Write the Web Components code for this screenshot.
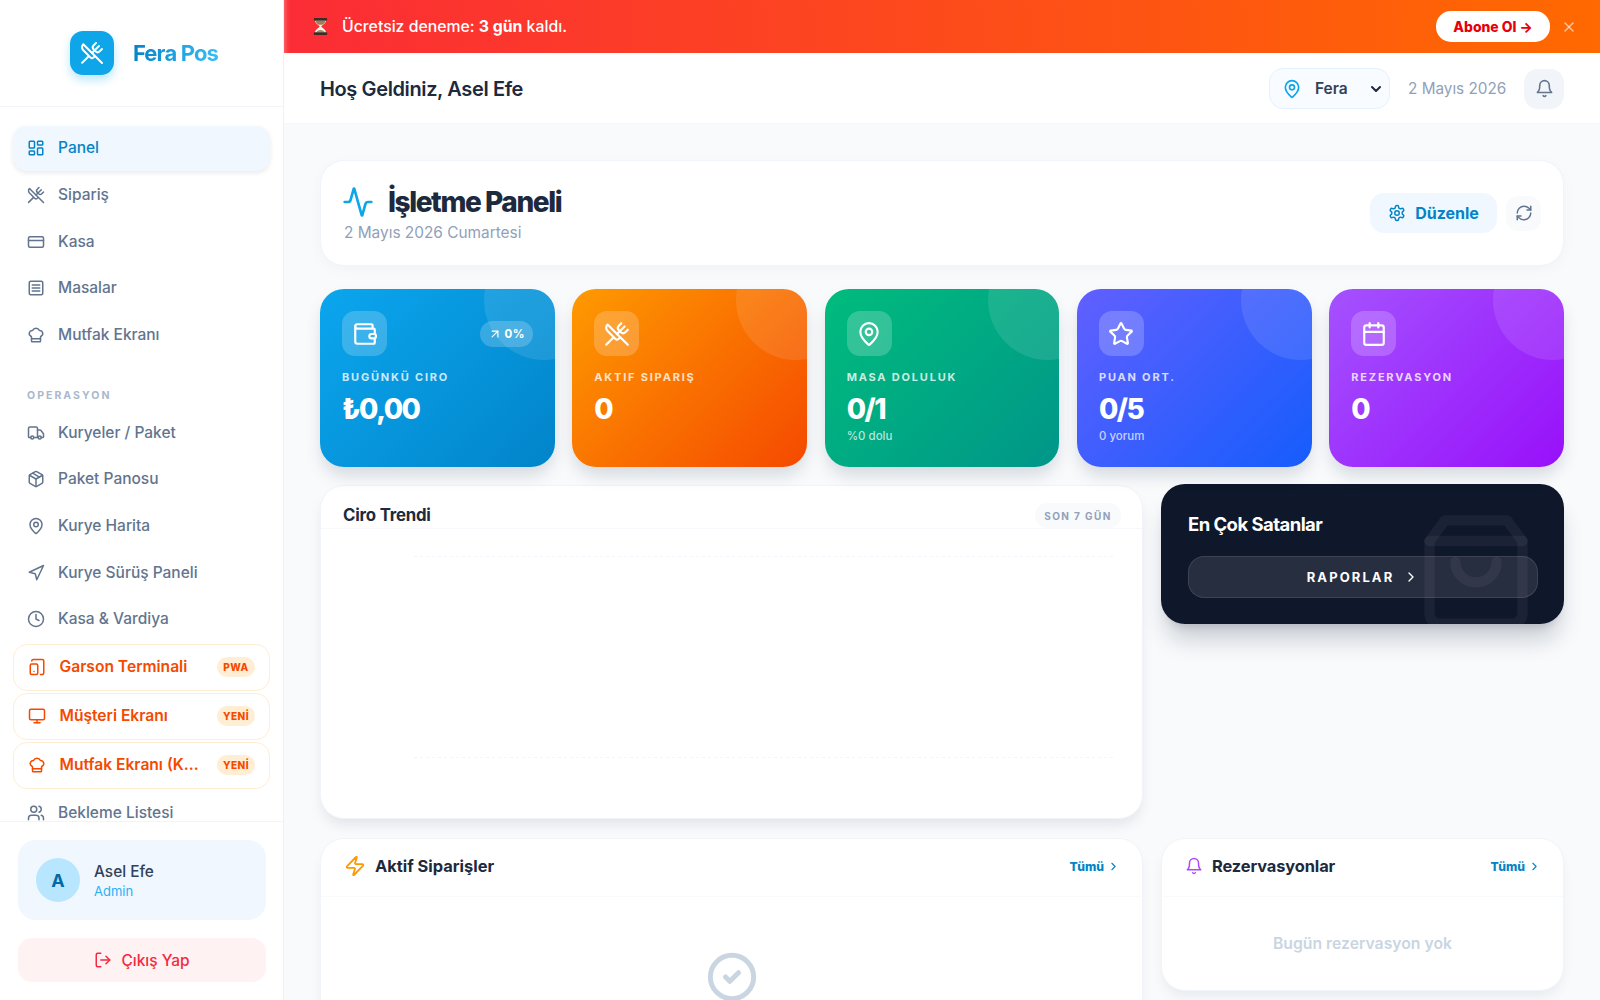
<!DOCTYPE html>
<html lang="tr">
<head>
<meta charset="utf-8">
<title>Fera Pos</title>
<style>
html,body{margin:0;padding:0;height:100%;overflow:hidden;background:#f8fafc;font-family:Inter,"Noto Sans",sans-serif;}
</style>
</head>
<body>
<app-shell>
  <side-bar slot="side">
    <brand-logo slot="brand">Fera Pos</brand-logo>
    <nav-item icon="dashboard" active>Panel</nav-item>
    <nav-item icon="utensils">Sipariş</nav-item>
    <nav-item icon="card">Kasa</nav-item>
    <nav-item icon="list">Masalar</nav-item>
    <nav-item icon="chef">Mutfak Ekranı</nav-item>
    <nav-heading>OPERASYON</nav-heading>
    <nav-item icon="truck">Kuryeler / Paket</nav-item>
    <nav-item icon="package">Paket Panosu</nav-item>
    <nav-item icon="pin">Kurye Harita</nav-item>
    <nav-item icon="navigation">Kurye Sürüş Paneli</nav-item>
    <nav-item icon="clock">Kasa &amp; Vardiya</nav-item>
    <nav-item icon="tablet" promo badge="PWA">Garson Terminali</nav-item>
    <nav-item icon="monitor" promo badge="YENİ">Müşteri Ekranı</nav-item>
    <nav-item icon="chef" promo badge="YENİ">Mutfak Ekranı (KDS)</nav-item>
    <nav-item icon="users">Bekleme Listesi</nav-item>
    <user-card slot="foot" name="Asel Efe" role="Admin" initial="A"></user-card>
    <logout-button slot="foot">Çıkış Yap</logout-button>
  </side-bar>
  <trial-banner slot="banner">Ücretsiz deneme: <b>3 gün</b> kaldı.</trial-banner>
  <top-bar slot="top" greeting="Hoş Geldiniz, Asel Efe" branch="Fera" date="2 Mayıs 2026"></top-bar>
  <page-title title-text="İşletme Paneli" sub="2 Mayıs 2026 Cumartesi"></page-title>
  <stat-row>
    <stat-card icon="wallet" label="BUGÜNKÜ CIRO" value="₺0,00" trend="0%" from="#0ba6ee" to="#0284c9"></stat-card>
    <stat-card icon="utensils" label="AKTIF SIPARIŞ" value="0" from="#fe9a00" to="#f54900"></stat-card>
    <stat-card icon="pin" label="MASA DOLULUK" value="0/1" sub="%0 dolu" from="#00bc7d" to="#009689"></stat-card>
    <stat-card icon="star" label="PUAN ORT." value="0/5" sub="0 yorum" from="#615fff" to="#155dfc"></stat-card>
    <stat-card icon="calendar" label="REZERVASYON" value="0" from="#a452ff" to="#9810fa"></stat-card>
  </stat-row>
  <two-col>
    <sales-trend slot="main" heading="Ciro Trendi" tag="SON 7 GÜN"></sales-trend>
    <best-sellers slot="aside" heading="En Çok Satanlar" action="RAPORLAR"></best-sellers>
  </two-col>
  <two-col low>
    <list-panel slot="main" icon="zap" tint="#fe9a00" heading="Aktif Siparişler" link="Tümü" tall>
      <ui-icon name="check" size="52" sw="2.3" color="#cad5e2"></ui-icon>
    </list-panel>
    <list-panel slot="aside" icon="bell" tint="#ad46ff" heading="Rezervasyonlar" link="Tümü">
      <empty-note>Bugün rezervasyon yok</empty-note>
    </list-panel>
  </two-col>
</app-shell>

<script>
const ICONS={
dashboard:'<rect width="7" height="9" x="3" y="3" rx="1"/><rect width="7" height="5" x="14" y="3" rx="1"/><rect width="7" height="9" x="14" y="12" rx="1"/><rect width="7" height="5" x="3" y="16" rx="1"/>',
utensils:'<path d="m16 2-2.3 2.3a3 3 0 0 0 0 4.2l1.8 1.8a3 3 0 0 0 4.2 0L22 8"/><path d="M15 15 3.3 3.3a4.2 4.2 0 0 0 0 6l7.3 7.3c.7.7 2 .7 2.8 0L15 15Zm0 0 7 7"/><path d="m2.1 21.8 6.4-6.3"/><path d="m19 5-7 7"/>',
card:'<rect width="20" height="14" x="2" y="5" rx="2"/><line x1="2" x2="22" y1="10" y2="10"/>',
list:'<rect width="18" height="18" x="3" y="3" rx="2"/><path d="M7 8h10"/><path d="M7 12h10"/><path d="M7 16h10"/>',
chef:'<path d="M17 21a1 1 0 0 0 1-1v-5.35c0-.457.316-.844.727-1.041a4 4 0 0 0-2.134-7.589 5 5 0 0 0-9.186 0 4 4 0 0 0-2.134 7.588c.411.198.727.585.727 1.041V20a1 1 0 0 0 1 1Z"/><path d="M6 17h12"/>',
truck:'<path d="M14 18V6a2 2 0 0 0-2-2H4a2 2 0 0 0-2 2v11a1 1 0 0 0 1 1h2"/><path d="M15 18H9"/><path d="M19 18h2a1 1 0 0 0 1-1v-3.65a1 1 0 0 0-.22-.624l-3.48-4.35A1 1 0 0 0 17.52 8H14"/><circle cx="17" cy="18" r="2"/><circle cx="7" cy="18" r="2"/>',
package:'<path d="M11 21.73a2 2 0 0 0 2 0l7-4A2 2 0 0 0 21 16V8a2 2 0 0 0-1-1.73l-7-4a2 2 0 0 0-2 0l-7 4A2 2 0 0 0 3 8v8a2 2 0 0 0 1 1.73z"/><path d="M12 22V12"/><polyline points="3.29 7 12 12 20.71 7"/><path d="m7.5 4.27 9 5.15"/>',
pin:'<path d="M20 10c0 4.993-5.539 10.193-7.399 11.799a1 1 0 0 1-1.202 0C9.539 20.193 4 14.993 4 10a8 8 0 0 1 16 0"/><circle cx="12" cy="10" r="3"/>',
navigation:'<polygon points="3 11 22 2 13 21 11 13 3 11"/>',
clock:'<circle cx="12" cy="12" r="10"/><polyline points="12 6 12 12 16 14"/>',
tablet:'<rect width="10" height="14" x="3" y="8" rx="2"/><path d="M5 4a2 2 0 0 1 2-2h12a2 2 0 0 1 2 2v16a2 2 0 0 1-2 2h-2.4"/><path d="M8 18h.01"/>',
monitor:'<rect width="20" height="14" x="2" y="3" rx="2"/><line x1="8" x2="16" y1="21" y2="21"/><line x1="12" x2="12" y1="17" y2="21"/>',
users:'<path d="M16 21v-2a4 4 0 0 0-4-4H6a4 4 0 0 0-4 4v2"/><circle cx="9" cy="7" r="4"/><path d="M22 21v-2a4 4 0 0 0-3-3.87"/><path d="M16 3.13a4 4 0 0 1 0 7.75"/>',
logout:'<path d="M9 21H5a2 2 0 0 1-2-2V5a2 2 0 0 1 2-2h4"/><polyline points="16 17 21 12 16 7"/><line x1="21" x2="9" y1="12" y2="12"/>',
bell:'<path d="M6 8a6 6 0 0 1 12 0c0 7 3 9 3 9H3s3-2 3-9"/><path d="M10.3 21a1.94 1.94 0 0 0 3.4 0"/>',
activity:'<path d="M22 12h-2.48a2 2 0 0 0-1.93 1.46l-2.35 8.36a.25.25 0 0 1-.48 0L9.24 2.18a.25.25 0 0 0-.48 0l-2.35 8.36A2 2 0 0 1 4.49 12H2"/>',
settings:'<path d="M12.22 2h-.44a2 2 0 0 0-2 2v.18a2 2 0 0 1-1 1.73l-.43.25a2 2 0 0 1-2 0l-.15-.08a2 2 0 0 0-2.73.73l-.22.38a2 2 0 0 0 .73 2.73l.15.1a2 2 0 0 1 1 1.72v.51a2 2 0 0 1-1 1.74l-.15.09a2 2 0 0 0-.73 2.73l.22.38a2 2 0 0 0 2.73.73l.15-.08a2 2 0 0 1 2 0l.43.25a2 2 0 0 1 1 1.73V20a2 2 0 0 0 2 2h.44a2 2 0 0 0 2-2v-.18a2 2 0 0 1 1-1.73l.43-.25a2 2 0 0 1 2 0l.15.08a2 2 0 0 0 2.73-.73l.22-.39a2 2 0 0 0-.73-2.73l-.15-.08a2 2 0 0 1-1-1.74v-.5a2 2 0 0 1 1-1.74l.15-.09a2 2 0 0 0 .73-2.73l-.22-.38a2 2 0 0 0-2.73-.73l-.15.08a2 2 0 0 1-2 0l-.43-.25a2 2 0 0 1-1-1.73V4a2 2 0 0 0-2-2z"/><circle cx="12" cy="12" r="3"/>',
refresh:'<path d="M3 12a9 9 0 0 1 9-9 9.75 9.75 0 0 1 6.74 2.74L21 8"/><path d="M21 3v5h-5"/><path d="M21 12a9 9 0 0 1-9 9 9.75 9.75 0 0 1-6.74-2.74L3 16"/><path d="M8 16H3v5"/>',
wallet:'<path d="M19 7V4a1 1 0 0 0-1-1H5a2 2 0 0 0 0 4h15a1 1 0 0 1 1 1v4h-3a2 2 0 0 0 0 4h3a1 1 0 0 0 1-1v-2a1 1 0 0 0-1-1"/><path d="M3 5v14a2 2 0 0 0 2 2h15a1 1 0 0 0 1-1v-4"/>',
upright:'<path d="M7 7h10v10"/><path d="M7 17 17 7"/>',
star:'<path d="M11.525 2.295a.53.53 0 0 1 .95 0l2.31 4.679a2.123 2.123 0 0 0 1.595 1.16l5.166.756a.53.53 0 0 1 .294.904l-3.736 3.638a2.123 2.123 0 0 0-.611 1.878l.882 5.14a.53.53 0 0 1-.771.56l-4.618-2.428a2.122 2.122 0 0 0-1.973 0L6.396 21.01a.53.53 0 0 1-.77-.56l.881-5.139a2.122 2.122 0 0 0-.611-1.879L2.16 9.795a.53.53 0 0 1 .294-.906l5.165-.755a2.122 2.122 0 0 0 1.597-1.16z"/>',
calendar:'<path d="M8 2v4"/><path d="M16 2v4"/><rect width="18" height="18" x="3" y="4" rx="2"/><path d="M3 10h18"/>',
bag:'<path d="M6 2 3 6v14a2 2 0 0 0 2 2h14a2 2 0 0 0 2-2V6l-3-4Z"/><path d="M3 6h18"/><path d="M16 10a4 4 0 0 1-8 0"/>',
chevright:'<path d="m9 18 6-6-6-6"/>',
chevdown:'<path d="m6 9 6 6 6-6"/>',
x:'<path d="M18 6 6 18"/><path d="m6 6 12 12"/>',
zap:'<path d="M4 14a1 1 0 0 1-.78-1.63l9.9-10.2a.5.5 0 0 1 .86.46l-1.92 6.02A1 1 0 0 0 13 10h7a1 1 0 0 1 .78 1.63l-9.9 10.2a.5.5 0 0 1-.86-.46l1.92-6.02A1 1 0 0 0 11 14z"/>',
check:'<circle cx="12" cy="12" r="10"/><path d="m9 12 2 2 4-4"/>'
};
const HOURGLASS='<svg xmlns="http://www.w3.org/2000/svg" width="15" height="17" viewBox="0 0 15 17" role="img" aria-label="⏳"><path d="M2 2C2 6 6.6 7.4 6.6 8.5S2 11 2 15h11c0-4-4.6-5.400-4.600-6.500S13 6 13 2z" fill="#f4f2f0"/><path d="M2.800 3h9.400c0 1.800-1.500 3-2.800 3.700H5.600C4.300 6 2.800 4.800 2.800 3z" fill="#a97b52"/><path d="M3.200 14.500c.5-1.600 2.300-2.500 4.300-2.500s3.800.9 4.300 2.500z" fill="#b08659"/><rect x=".8" width="13.400" height="2.700" rx="1.100" fill="#3b2c26"/><rect x=".8" y="14.300" width="13.400" height="2.700" rx="1.100" fill="#3b2c26"/></svg>';
const esc=s=>(s==null?'':String(s)).replace(/&/g,'&amp;').replace(/</g,'&lt;').replace(/"/g,'&quot;');
const icon=(n,s,c,sw)=>`<ui-icon name="${n}" size="${s}"${c?` color="${c}"`:''}${sw?` sw="${sw}"`:''}></ui-icon>`;
function el(tag,render){
  customElements.define(tag,class extends HTMLElement{
    connectedCallback(){
      if(this.shadowRoot)return;
      const a=this.attachShadow({mode:'open'});
      const attrs=new Proxy({},{get:(_,k)=>this.getAttribute(k),has:(_,k)=>this.hasAttribute(k)});
      a.innerHTML=render(attrs);
    }
  });
}
el('ui-icon',a=>{const s=a.size||18;return `<style>:host{display:inline-flex;flex:none;width:${s}px;height:${s}px;color:${a.color||'inherit'}}svg{display:block}</style><svg xmlns="http://www.w3.org/2000/svg" width="${s}" height="${s}" viewBox="0 0 24 24" fill="none" stroke="currentColor" stroke-width="${a.sw||2}" stroke-linecap="round" stroke-linejoin="round">${ICONS[a.name]||''}</svg>`});

el('app-shell',()=>`<style>
:host{display:grid;grid-template-columns:284px 1fr;height:100vh;overflow:hidden;color:#1d293d;font-family:Inter,"Noto Sans",sans-serif}
.main{display:flex;flex-direction:column;min-width:0;height:100vh;overflow:hidden}
.scroll{flex:1;min-height:0;overflow:hidden;padding:37px 36px 0;display:flex;flex-direction:column}
</style><slot name="side"></slot><div class="main"><slot name="banner"></slot><slot name="top"></slot><div class="scroll"><slot></slot></div></div>`);

el('side-bar',()=>`<style>
:host{display:flex;flex-direction:column;height:100vh;background:#fff;border-right:1px solid #eef2f8;box-sizing:border-box;overflow:hidden}
.brand{height:107px;flex:none;box-sizing:border-box;border-bottom:1px solid #f1f5f9;display:flex;align-items:center;justify-content:center;padding-left:5px}
nav{flex:1;min-height:0;overflow:hidden;padding:19px 13px 0;display:flex;flex-direction:column;gap:2px}
.foot{flex:none;border-top:1px solid #f1f5f9;padding:18px 17px 18px 18px;display:flex;flex-direction:column;gap:18px}
</style><div class="brand"><slot name="brand"></slot></div><nav><slot></slot></nav><div class="foot"><slot name="foot"></slot></div>`);

el('brand-logo',()=>`<style>
:host{display:flex;align-items:center;gap:19px}
.mark{width:44px;height:44px;border-radius:13px;background:#0ea5e9;color:#fff;display:flex;align-items:center;justify-content:center;box-shadow:0 5px 10px rgba(14,165,233,.28)}
.name{font-size:22px;font-weight:700;letter-spacing:-.85px;line-height:32px;background:linear-gradient(90deg,#0284c7,#38bdf8);-webkit-background-clip:text;background-clip:text;color:transparent}
</style><span class="mark">${icon('utensils',24,'#fff')}</span><span class="name"><slot></slot></span>`);

el('nav-item',a=>{
 const promo='promo' in a, active='active' in a;
 return `<style>
:host{display:flex;flex:none;box-sizing:border-box;height:${promo?47:44.67}px;align-items:center;gap:${promo?13.5:13}px;padding:0 14px;border-radius:14px;font-size:${promo?15.6:15.5}px;line-height:20px;font-weight:${promo?600:500};color:${promo?'#f54900':active?'#0284c7':'#62748e'};
${active?'background:#f0f7fe;box-shadow:0 2px 5px rgba(15,23,43,.09);':''}${promo?'border:1.5px solid #ffedd4;':''}}
.t{flex:1;min-width:0;white-space:nowrap;overflow:hidden;text-overflow:ellipsis}
.b{flex:none;width:38px;height:20px;border-radius:10px;background:#ffedd4;color:#f54900;font-size:10px;font-weight:800;letter-spacing:.5px;display:flex;align-items:center;justify-content:center}
</style>${icon(a.icon,18,promo?'#f54900':null)}<span class="t"><slot></slot></span>${a.badge?`<span class="b">${esc(a.badge)}</span>`:''}`});

el('nav-heading',()=>`<style>
:host{display:flex;flex:none;height:49px;box-sizing:border-box;align-items:flex-end;padding:0 14px 5px;font-size:10.5px;line-height:14px;font-weight:700;letter-spacing:2.05px;color:#aab8cc}
</style><slot></slot>`);

el('user-card',a=>`<style>
:host{display:flex;align-items:center;gap:14px;height:80px;box-sizing:border-box;padding:0 18px;border-radius:18px;background:#f0f7ff}
.av{width:44px;height:44px;border-radius:50%;background:#b8e6fe;color:#0069a8;font-size:18px;font-weight:700;display:flex;align-items:center;justify-content:center}
.w{margin-top:2px}
.n{font-size:15.4px;line-height:20px;font-weight:500;color:#314158}
.r{font-size:13px;line-height:17px;margin-top:1px;color:#29b1f5}
</style><span class="av">${esc(a.initial)}</span><span class="w"><div class="n">${esc(a.name)}</div><div class="r">${esc(a.role)}</div></span>`);

el('logout-button',()=>`<style>
:host{display:flex;align-items:center;justify-content:center;gap:9px;height:44px;border-radius:14px;background:#fef2f2;color:#f42a41;font-size:15.5px;font-weight:500}
</style>${icon('logout',18)}<span><slot></slot></span>`);

el('trial-banner',()=>`<style>
:host{display:flex;flex:none;align-items:center;height:53px;box-sizing:border-box;padding:0 23px 0 29px;background:linear-gradient(90deg,#fb2c36,#ff6900);color:#fff;font-size:15.8px;font-weight:500;box-shadow:inset 6px 0 6px -6px rgba(255,255,255,.5)}
.e{width:15px;height:17px;margin-right:14px;display:flex}
.t{flex:1}
::slotted(b){font-weight:700}
.b{height:31px;width:114px;border-radius:15px;background:#fff;color:#e7000b;font-size:13.9px;font-weight:800;display:flex;align-items:center;justify-content:center}
.x{margin-left:11px;display:flex;color:rgba(255,255,255,.62)}
</style><span class="e">${HOURGLASS}</span><span class="t"><slot></slot></span><span class="b">Abone Ol →</span><span class="x">${icon('x',16)}</span>`);

el('top-bar',a=>`<style>
:host{display:flex;flex:none;align-items:center;height:70px;box-sizing:border-box;padding:1px 36px 0;background:#fff;box-shadow:0 1px 0 #f4f7fb}
h2{flex:1;margin:0;font-size:20px;line-height:28px;font-weight:600;color:#1d293d;letter-spacing:-.38px}
.sel{display:flex;align-items:center;box-sizing:border-box;width:121px;height:41px;padding:0 5px 0 12px;border:1.5px solid #e3f2fe;border-radius:14px;background:#f8fbff;color:#314158;font-size:15.5px;font-weight:600}
.sel .f{flex:1;margin-left:13px}
.d{margin:0 18px;font-size:15.3px;line-height:20px;color:#90a1b9;width:98px;white-space:nowrap}
.bell{width:40px;height:40px;border-radius:14px;background:#f1f5f9;display:flex;align-items:center;justify-content:center;color:#62748e}
</style><h2>${esc(a.greeting)}</h2><div class="sel">${icon('pin',20,'#0ea5e9')}<span class="f">${esc(a.branch)}</span>${icon('chevdown',16,'#1d293d',3)}</div><span class="d">${esc(a.date)}</span><span class="bell">${icon('bell',19)}</span>`);

el('page-title',a=>`<style>
:host{display:flex;flex:none;align-items:center;height:106px;box-sizing:border-box;padding:0 22px 0 21px;background:#fff;border:1px solid #f1f5f9;border-radius:24px;box-shadow:0 4px 14px rgba(15,23,43,.03)}
.l{flex:1}
.h{display:flex;align-items:center;gap:14px;height:34px;margin-top:2px}
h1{margin:0;font-size:28px;line-height:34px;font-weight:800;letter-spacing:-1.42px;color:#1d293d}
.s{margin:4px 0 0 2px;font-size:15.4px;line-height:20px;color:#90a1b9}
.e{display:flex;align-items:center;justify-content:center;gap:9px;width:127px;height:40px;border-radius:14px;background:#f0f7fe;color:#0284c7;font-size:16px;font-weight:700}
.r{margin-left:9px;width:35px;height:35px;box-sizing:border-box;border-radius:12px;background:#f8fafc;color:#62748e;display:flex;align-items:center;justify-content:center}
</style><div class="l"><div class="h">${icon('activity',32,'#0ea5e9')}<h1>${esc(a['title-text'])}</h1></div><div class="s">${esc(a.sub)}</div></div><span class="e">${icon('settings',18)}Düzenle</span><span class="r">${icon('refresh',18)}</span>`);

el('stat-row',()=>`<style>
:host{display:grid;flex:none;grid-template-columns:repeat(5,1fr);gap:17.6px;margin-top:23px;position:relative;z-index:2}
</style><slot></slot>`);

el('stat-card',a=>`<style>
:host{display:block;position:relative;height:178px;box-sizing:border-box;padding:22px;border-radius:24px;overflow:hidden;color:#fff;background:linear-gradient(135deg,${a.from},${a.to});box-shadow:0 10px 18px -3px rgba(15,23,43,.16)}
.wrap{position:relative}
:host::before{content:"";position:absolute;top:-49px;right:-49px;width:120px;height:120px;border-radius:50%;background:rgba(255,255,255,.1)}
.top{display:flex;align-items:center;justify-content:space-between;height:45px}
.ic{width:45px;height:45px;border-radius:13px;background:rgba(255,255,255,.2);display:flex;align-items:center;justify-content:center}
.tr{display:flex;align-items:center;gap:3px;height:26px;width:53px;margin-top:1px;box-sizing:border-box;justify-content:center;border-radius:13px;background:rgba(255,255,255,.2);font-size:11.5px;font-weight:700;letter-spacing:.5px}
.la{margin-top:14px;font-size:11px;line-height:14px;font-weight:700;letter-spacing:1.8px;color:rgba(255,255,255,.8)}
.v{margin-top:8px;font-size:28px;line-height:34px;font-weight:800;letter-spacing:-1.5px}
.su{margin-top:3px;font-size:11.5px;line-height:14px;font-weight:500;color:rgba(255,255,255,.72)}
</style><div class="wrap"><div class="top"><span class="ic">${icon(a.icon,26,'#fff')}</span>${a.trend?`<span class="tr">${icon('upright',14,'#fff')}${esc(a.trend)}</span>`:''}</div><div class="la">${esc(a.label)}</div><div class="v">${esc(a.value)}</div>${a.sub?`<div class="su">${esc(a.sub)}</div>`:''}</div>`);

el('two-col',a=>`<style>
:host{display:grid;flex:none;grid-template-columns:823px 403px;column-gap:18px;align-items:start;margin-top:${'low' in a?19:18}px}
::slotted([slot=aside]){margin-top:${'low' in a?0:-1}px}
</style><slot name="main"></slot><slot name="aside"></slot>`);

el('sales-trend',a=>`<style>
:host{display:block;height:334px;box-sizing:border-box;background:#fff;border-radius:24px;border:1px solid #f1f5f9;box-shadow:0 8px 14px -3px rgba(15,23,43,.1);overflow:hidden}
.h{display:flex;align-items:flex-end;justify-content:space-between;height:43px;box-sizing:border-box;padding:0 21px 0 22px;border-bottom:1px solid #f6f8fb}
.ti{font-size:16.8px;line-height:24px;font-weight:700;letter-spacing:-.2px;color:#1d293d;margin-bottom:1.5px}
.tag{width:86px;height:25px;border-radius:13px;background:#f8fafc;color:#90a1b9;font-size:10px;font-weight:700;letter-spacing:1.4px;display:flex;align-items:center;justify-content:center}
.c{height:289px;padding:27px 28px 0 93px;box-sizing:border-box;display:flex;flex-direction:column;gap:200px}
.c i{display:block;height:1px;background:repeating-linear-gradient(90deg,#f1f5f9 0 3px,transparent 3px 6px)}
</style><div class="h"><span class="ti">${esc(a.heading)}</span><span class="tag">${esc(a.tag)}</span></div><div class="c"><i></i><i></i></div>`);

el('best-sellers',a=>`<style>
:host{display:block;position:relative;height:140px;box-sizing:border-box;padding:26px 26px 0 27px;border-radius:24px;overflow:hidden;background:#0f172b;color:#fff;box-shadow:0 20px 25px -5px rgba(15,23,43,.2),0 8px 10px -6px rgba(15,23,43,.15)}
.ti{font-size:18.5px;line-height:28px;font-weight:700;letter-spacing:-.55px}
.b{position:relative;margin-top:18px;height:42px;box-sizing:border-box;border-radius:16px;border:1px solid rgba(255,255,255,.1);background:rgba(255,255,255,.1);display:flex;align-items:center;justify-content:center;gap:9px;font-size:13px;font-weight:700;letter-spacing:2.1px}
.bag{position:absolute;top:26px;right:26px;color:rgba(255,255,255,.05);pointer-events:none}
</style><div class="ti">${esc(a.heading)}</div><div class="b">${esc(a.action)}${icon('chevright',16)}</div><span class="bag">${icon('bag',124)}</span>`);

el('list-panel',a=>`<style>
:host{display:block;box-sizing:border-box;background:#fff;border-radius:24px;border:1px solid #f1f5f9;box-shadow:0 8px 14px -3px rgba(15,23,43,.07);overflow:hidden;${'tall' in a?'height:300px':'height:153px'}}
.h{display:flex;align-items:center;height:58px;box-sizing:border-box;padding:0 22px 3px 23px;border-bottom:1px solid #f8fafc;gap:9px}
.ti{flex:1;font-size:16.4px;line-height:24px;font-weight:700;color:#1d293d;letter-spacing:${'tall' in a?0:-.1}px}
.l{display:flex;align-items:center;gap:3px;font-size:12.2px;font-weight:800;color:#0284c7}
.b{display:flex;justify-content:center;padding-top:${'tall' in a?54:36}px}
</style><div class="h">${icon(a.icon,'tall' in a?22:18,a.tint)}<span class="ti">${esc(a.heading)}</span><span class="l">${esc(a.link)}${icon('chevright',13)}</span></div><div class="b"><slot></slot></div>`);

el('empty-note',()=>`<style>:host{display:block;font-size:15.75px;line-height:22px;font-weight:600;color:#cad5e2}</style><slot></slot>`);
</script>
</body>
</html>
